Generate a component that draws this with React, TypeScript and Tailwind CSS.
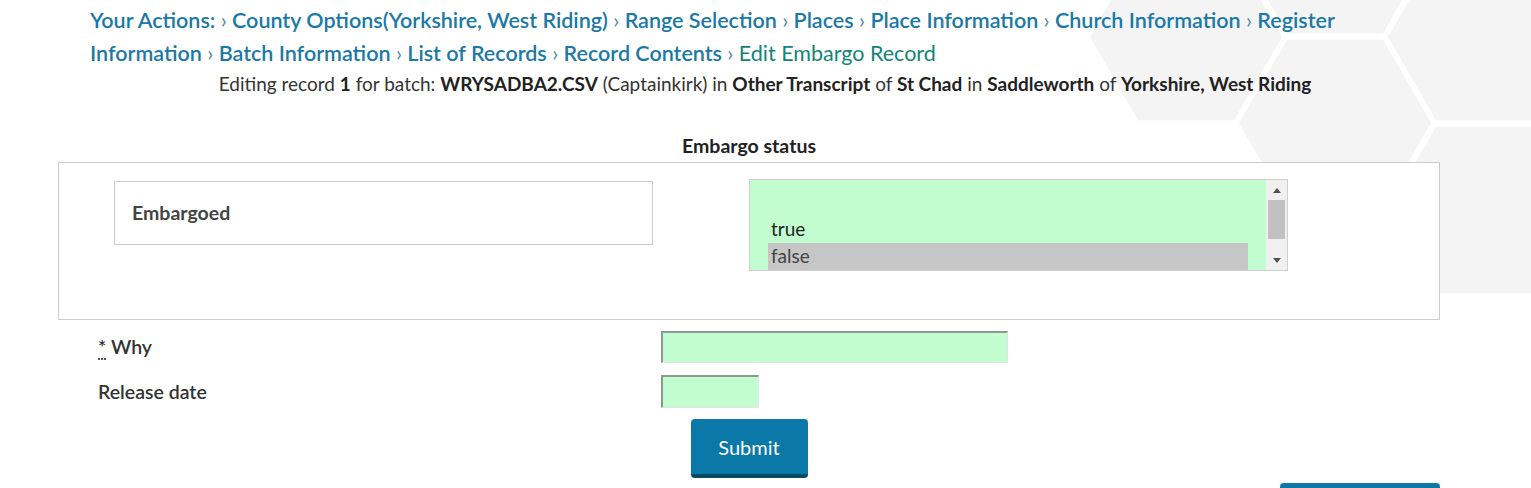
import React from 'react';

// Breadcrumb-Pfad oben auf der Seite
const crumbs = [
  'County Options(Yorkshire, West Riding)',
  'Range Selection',
  'Places',
  'Place Information',
  'Church Information',
  'Register Information',
  'Batch Information',
  'List of Records',
  'Record Contents',
];

// Sechseck-Muster im Hintergrund rechts oben
function HexBackground() {
  const centers: [number, number][] = [
    [1186, 37],
    [1335, -50],
    [1335, 123],
    [1484, 37],
    [1484, 210],
  ];
  const r = 96;
  const hex = (cx: number, cy: number) =>
    [0, 60, 120, 180, 240, 300]
      .map((a) => {
        const rad = (a * Math.PI) / 180;
        return `${cx + r * Math.cos(rad)},${cy + r * Math.sin(rad)}`;
      })
      .join(' ');
  return (
    <svg
      className="absolute left-0 top-0 w-[1531px] h-[488px] pointer-events-none"
      viewBox="0 0 1531 488"
      aria-hidden="true"
    >
      {centers.map(([x, y]) => (
        <polygon key={`${x}-${y}`} points={hex(x, y)} fill="#f4f4f4" />
      ))}
    </svg>
  );
}

function Sep() {
  return (
    <>
      {' '}
      <span className="font-normal text-[#5b8ba3]">›</span>{' '}
    </>
  );
}

export default function App() {
  return (
    <div className="relative min-h-screen bg-white overflow-hidden font-['Lato','Liberation_Sans',sans-serif] text-[#333]">
      <HexBackground />

      <div className="relative ml-[58px] w-[1382px]">
        {/* Breadcrumbs */}
        <div className="pl-[32px] pt-[4px]">
          <p className="text-[21.5px] leading-[33px] font-semibold text-[#1a79a6]">
            <span>Your Actions:</span>
            {crumbs.map((c) => (
              <React.Fragment key={c}>
                <Sep />
                <a className="cursor-pointer">{c}</a>
              </React.Fragment>
            ))}
            <Sep />
            <span className="font-normal text-[#128577]">Edit Embargo Record</span>
          </p>
          <p className="text-center text-[19px] leading-[28px] text-[#333]">
            Editing record <b className="font-bold text-[#222]">1</b> for batch:{' '}
            <b className="font-bold text-[#222]">WRYSADBA2.CSV</b> (Captainkirk) in{' '}
            <b className="font-bold text-[#222]">Other Transcript</b> of{' '}
            <b className="font-bold text-[#222]">St Chad</b> in{' '}
            <b className="font-bold text-[#222]">Saddleworth</b> of{' '}
            <b className="font-bold text-[#222]">Yorkshire, West Riding</b>
          </p>
        </div>

        {/* Embargo-Status */}
        <h3 className="mt-[34px] mb-[2px] text-center text-[19.5px] leading-[28px] font-bold text-[#222]">
          Embargo status
        </h3>
        <div className="h-[158px] border border-[#cccccc] bg-white grid grid-cols-2">
          <div className="pl-[55px] pt-[18px]">
            <div className="w-[539px] h-[64px] border border-[#cccccc] flex items-center pl-[17px] text-[19.5px] font-bold text-[#444]">
              Embargoed
            </div>
          </div>
          <div className="pt-[16px]">
            <div className="w-[539px] h-[92px] border border-[#d0d0d0] bg-[#c2fdd0] flex">
              <div className="flex-1 pl-[18px] pr-[18px] pt-[36px] text-[19px]">
                <div className="h-[27px] leading-[26px] pl-[3px] text-[#222]">true</div>
                <div className="h-[27px] leading-[26px] pl-[3px] bg-[#c6c6c6] text-[#444]">false</div>
              </div>
              {/* Scrollbar */}
              <div className="w-[21px] bg-[#f0f0f0] flex flex-col items-center">
                <div className="h-[20px] flex items-center">
                  <div className="w-0 h-0 border-l-[4px] border-r-[4px] border-b-[5px] border-l-transparent border-r-transparent border-b-[#505050]" />
                </div>
                <div className="w-[17px] h-[39px] bg-[#c1c1c1]" />
                <div className="flex-1" />
                <div className="h-[20px] flex items-center">
                  <div className="w-0 h-0 border-l-[4px] border-r-[4px] border-t-[5px] border-l-transparent border-r-transparent border-t-[#505050]" />
                </div>
              </div>
            </div>
          </div>
        </div>

        {/* Felder */}
        <div className="mt-[11px] flex items-center h-[32px]">
          <label className="w-[603px] pl-[40px] text-[19.5px] font-semibold text-[#333]">
            <abbr className="no-underline border-b-2 border-dotted border-[#555]" title="required">*</abbr> Why
          </label>
          <input className="w-[347px] h-[32px] bg-[#c2fdd0] border-t-2 border-l-2 border-b border-r border-t-[#8e9a90] border-l-[#8e9a90] border-b-[#e4e4e4] border-r-[#e4e4e4] outline-none" />
        </div>
        <div className="mt-[12px] flex items-center h-[33px]">
          <label className="w-[603px] pl-[40px] text-[19.5px] font-semibold text-[#333]">Release date</label>
          <input className="w-[98px] h-[33px] bg-[#c2fdd0] border-t-2 border-l-2 border-b border-r border-t-[#8e9a90] border-l-[#8e9a90] border-b-[#e4e4e4] border-r-[#e4e4e4] outline-none" />
        </div>

        <div className="mt-[11px] flex justify-center">
          <button className="w-[117px] h-[59px] rounded-[4px] bg-[#0a79a7] border-b-[4px] border-[#064a66] text-white text-[20px]">
            Submit
          </button>
        </div>
        <div className="mt-[5px] flex justify-end">
          <button className="w-[160px] h-[64px] rounded-[4px] bg-[#0a79a7] text-white text-[20px]">Back</button>
        </div>
      </div>
    </div>
  );
}
